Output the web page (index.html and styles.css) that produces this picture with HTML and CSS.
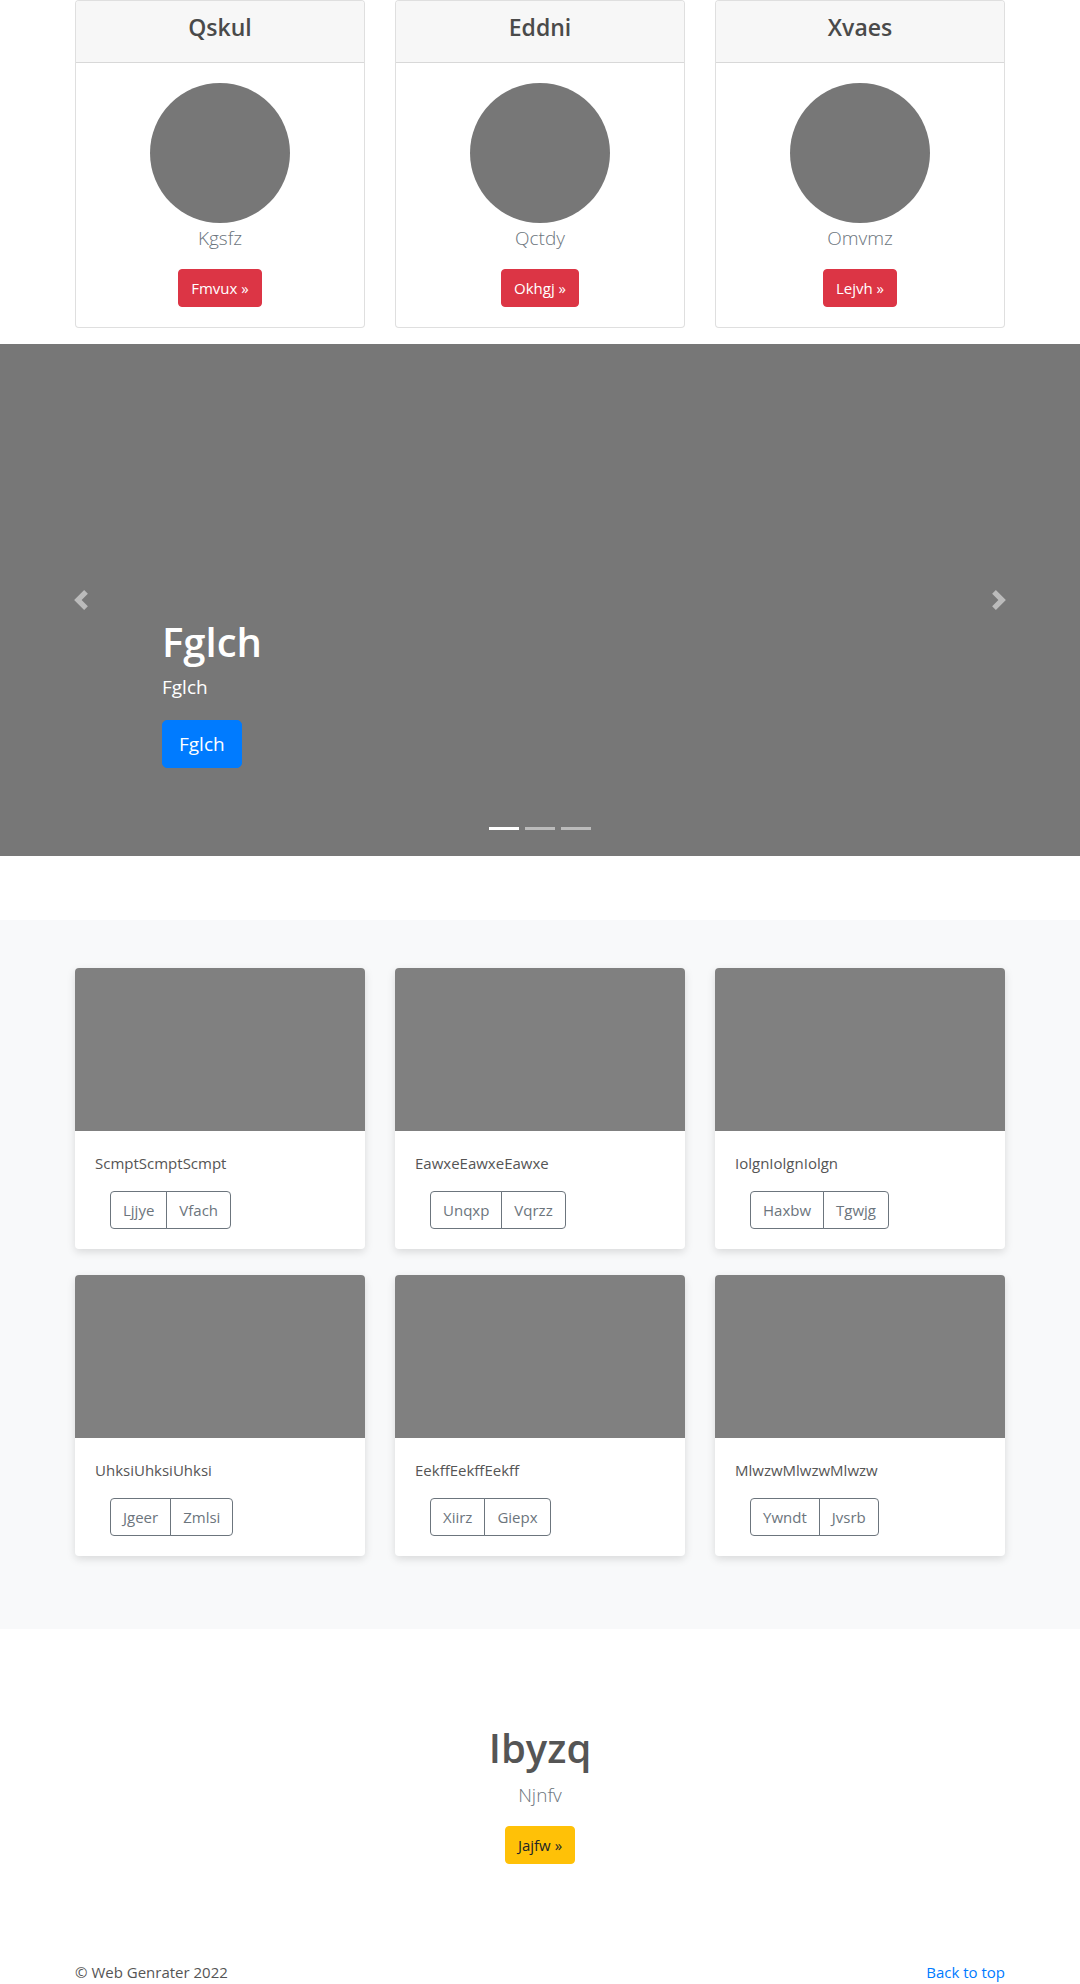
FILE: index.html
```html
<!DOCTYPE html>
<html lang="en">
<head>
<meta charset="utf-8">
<title>Web Genrater</title>
<link rel="stylesheet" href="styles.css">
</head>
<body>
<div class="container">
  <div class="row3 team">
    <div class="card">
      <div class="card-header"><h4>Qskul</h4></div>
      <div class="card-body">
        <svg class="avatar" width="140" height="140" viewBox="0 0 140 140"><circle cx="70" cy="70" r="70" fill="#777"/></svg>
        <p class="lead">Kgsfz</p>
        <a class="btn btn-danger" href="#">Fmvux &raquo;</a>
      </div>
    </div>
    <div class="card">
      <div class="card-header"><h4>Eddni</h4></div>
      <div class="card-body">
        <svg class="avatar" width="140" height="140" viewBox="0 0 140 140"><circle cx="70" cy="70" r="70" fill="#777"/></svg>
        <p class="lead">Qctdy</p>
        <a class="btn btn-danger" href="#">Okhgj &raquo;</a>
      </div>
    </div>
    <div class="card">
      <div class="card-header"><h4>Xvaes</h4></div>
      <div class="card-body">
        <svg class="avatar" width="140" height="140" viewBox="0 0 140 140"><circle cx="70" cy="70" r="70" fill="#777"/></svg>
        <p class="lead">Omvmz</p>
        <a class="btn btn-danger" href="#">Lejvh &raquo;</a>
      </div>
    </div>
  </div>
</div>

<div class="carousel">
  <ol class="indicators">
    <li class="active"></li>
    <li></li>
    <li></li>
  </ol>
  <a class="control prev" href="#">
    <svg width="20" height="20" viewBox="0 0 8 8"><path fill="#fff" d="M5.25 0l-4 4 4 4 1.5-1.5L4.25 4l2.5-2.5L5.25 0z"/></svg>
  </a>
  <div class="caption">
    <h1>Fglch</h1>
    <p class="caption-text">Fglch</p>
    <a class="btn btn-lg btn-primary" href="#">Fglch</a>
  </div>
  <a class="control next" href="#">
    <svg width="20" height="20" viewBox="0 0 8 8"><path fill="#fff" d="M2.75 0l-1.5 1.5L3.75 4l-2.5 2.5L2.75 8l4-4-4-4z"/></svg>
  </a>
</div>

<section class="album">
  <div class="container">
    <div class="row3 grid">
      <div class="acard">
        <div class="thumb"></div>
        <div class="acard-body">
          <p class="card-text">ScmptScmptScmpt</p>
          <div class="btn-group"><a class="btn btn-outline" href="#">Ljjye</a><a class="btn btn-outline" href="#">Vfach</a></div>
        </div>
      </div>
      <div class="acard">
        <div class="thumb"></div>
        <div class="acard-body">
          <p class="card-text">EawxeEawxeEawxe</p>
          <div class="btn-group"><a class="btn btn-outline" href="#">Unqxp</a><a class="btn btn-outline" href="#">Vqrzz</a></div>
        </div>
      </div>
      <div class="acard">
        <div class="thumb"></div>
        <div class="acard-body">
          <p class="card-text">IolgnIolgnIolgn</p>
          <div class="btn-group"><a class="btn btn-outline" href="#">Haxbw</a><a class="btn btn-outline" href="#">Tgwjg</a></div>
        </div>
      </div>
      <div class="acard">
        <div class="thumb"></div>
        <div class="acard-body">
          <p class="card-text">UhksiUhksiUhksi</p>
          <div class="btn-group"><a class="btn btn-outline" href="#">Jgeer</a><a class="btn btn-outline" href="#">Zmlsi</a></div>
        </div>
      </div>
      <div class="acard">
        <div class="thumb"></div>
        <div class="acard-body">
          <p class="card-text">EekffEekffEekff</p>
          <div class="btn-group"><a class="btn btn-outline" href="#">Xiirz</a><a class="btn btn-outline" href="#">Giepx</a></div>
        </div>
      </div>
      <div class="acard">
        <div class="thumb"></div>
        <div class="acard-body">
          <p class="card-text">MlwzwMlwzwMlwzw</p>
          <div class="btn-group"><a class="btn btn-outline" href="#">Ywndt</a><a class="btn btn-outline" href="#">Jvsrb</a></div>
        </div>
      </div>
    </div>
  </div>
</section>

<section class="cta">
  <h1>Ibyzq</h1>
  <p class="lead">Njnfv</p>
  <a class="btn btn-warning" href="#">Jajfw &raquo;</a>
</section>

<footer class="footer">
  <div class="container footer-row">
    <p>&copy; Web Genrater 2022</p>
    <a href="#">Back to top</a>
  </div>
</footer>
</body>
</html>
```

FILE: styles.css
```css
* { box-sizing: border-box; }

body {
  margin: 0;
  font-family: "Open Sans", "Noto Sans", "Liberation Sans", sans-serif;
  font-size: 16px;
  line-height: 1.5;
  color: #555;
  background: #fff;
}

a { text-decoration: none; }

.container {
  max-width: 960px;
  margin: 0 auto;
  padding: 0 15px;
}

.row3 {
  display: grid;
  grid-template-columns: repeat(3, 290px);
  column-gap: 30px;
}

/* top team cards */
.card {
  border: 1px solid rgba(0, 0, 0, 0.125);
  border-radius: 4px;
  background: #fff;
  text-align: center;
}

.card-header {
  background: #f7f7f7;
  border-bottom: 1px solid rgba(0, 0, 0, 0.125);
  padding: 12px 20px;
  border-radius: 3px 3px 0 0;
}

.card-header h4 {
  margin: 0 0 8px;
  font-size: 23px;
  font-weight: 600;
  line-height: 28.8px;
  color: #4a4a4a;
}

.card-body {
  padding: 20px;
}

.avatar {
  display: block;
  margin: 0 auto;
}

.lead {
  font-size: 19px;
  font-weight: 300;
  line-height: 30px;
  margin: 0 0 16px;
  color: #6c757d;
}

.btn {
  display: inline-block;
  font-size: 15px;
  line-height: 24px;
  padding: 6px 12px;
  border: 1px solid transparent;
  border-radius: 4px;
}

.btn-danger { background: #dc3545; border-color: #dc3545; color: #fff; }
.btn-primary { background: #007bff; border-color: #007bff; color: #fff; }
.btn-warning { background: #ffc107; border-color: #ffc107; color: #212529; }

.btn-lg {
  font-size: 19px;
  line-height: 30px;
  padding: 8px 16px;
  border-radius: 5px;
}

/* carousel */
.carousel {
  position: relative;
  margin-top: 16px;
  height: 512px;
  background: #777;
}

.indicators {
  position: absolute;
  left: 0;
  right: 0;
  bottom: 26px;
  margin: 0;
  padding: 0;
  list-style: none;
  display: flex;
  justify-content: center;
}

.indicators li {
  width: 30px;
  height: 3px;
  margin: 0 3px;
  background: #fff;
  opacity: 0.5;
}

.indicators li.active { opacity: 1; }

.control {
  position: absolute;
  top: 0;
  bottom: 0;
  width: 15%;
  display: flex;
  align-items: center;
  justify-content: center;
  opacity: 0.5;
}

.control.prev { left: 0; }
.control.next { right: 0; }

.caption {
  position: absolute;
  left: 15%;
  bottom: 88px;
  color: #fff;
}

.caption h1 {
  margin: 0 0 6px;
  font-size: 40px;
  font-weight: 600;
  line-height: 48px;
}

.caption-text {
  margin: 0 0 18px;
  font-size: 19px;
  line-height: 30px;
}

/* album */
.album {
  margin-top: 64px;
  background: #f8f9fa;
  padding: 48px 0 73px;
}

.grid { row-gap: 26px; }

.acard {
  background: #fff;
  border-radius: 4px;
  overflow: hidden;
  box-shadow: 0 3px 9px rgba(0, 0, 0, 0.13);
}

.thumb {
  height: 163px;
  background: #808080;
}

.acard-body {
  padding: 20px;
}

.card-text {
  margin: 0 0 16px;
  font-size: 15px;
  line-height: 24px;
}

.btn-group {
  display: inline-flex;
  margin-left: 15px;
}

.btn-outline {
  color: #6c757d;
  border-color: #6c757d;
  background: transparent;
}

.btn-group .btn-outline:first-child {
  border-top-right-radius: 0;
  border-bottom-right-radius: 0;
}

.btn-group .btn-outline + .btn-outline {
  margin-left: -1px;
  border-top-left-radius: 0;
  border-bottom-left-radius: 0;
}

/* call to action */
.cta {
  text-align: center;
  padding: 95px 0 45px;
}

.cta h1 {
  margin: 0 0 8px;
  font-size: 40px;
  font-weight: 600;
  line-height: 48px;
  color: #555;
}

/* footer */
.footer {
  padding-top: 52px;
}

.footer-row {
  display: flex;
  justify-content: space-between;
}

.footer-row p {
  margin: 0;
  font-size: 15px;
}

.footer-row a {
  color: #007bff;
  font-size: 15px;
}
```
